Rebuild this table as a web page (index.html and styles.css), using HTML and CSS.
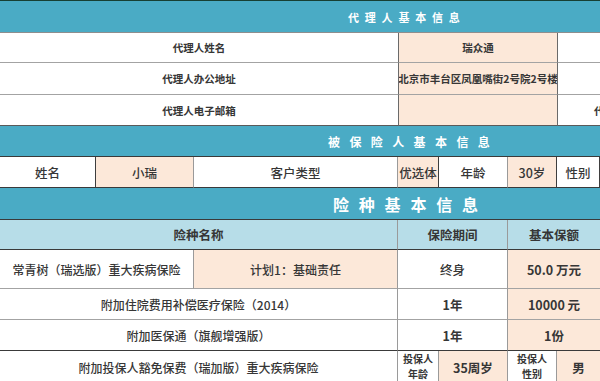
FILE: index.html
```html
<!DOCTYPE html>
<html lang="zh">
<head>
<meta charset="utf-8">
<title>保险信息</title>
<link rel="stylesheet" href="styles.css">
</head>
<body>
<div class="sheet">
  <div class="c hd hd1 span7"><span>代理人基本信息</span></div>

  <div class="c lbl span3 bl">代理人姓名</div>
  <div class="c val peach span3 bl vd">瑞众通</div>
  <div class="c blank bl vd"></div>

  <div class="c lbl span3 bl">代理人办公地址</div>
  <div class="c val peach span3 bl vd">北京市丰台区凤凰嘴街2号院2号楼</div>
  <div class="c blank bl vd"></div>

  <div class="c lbl span3 bd">代理人电子邮箱</div>
  <div class="c val peach span3 bd vd"></div>
  <div class="c blank clip bd vd"><span>代理人电话</span></div>

  <div class="c hd hd2 span7 bdk"><span>被保险人基本信息</span></div>

  <div class="c ins bdk vdk">姓名</div>
  <div class="c ins peach bdk vg">小瑞</div>
  <div class="c ins bdk vg">客户类型</div>
  <div class="c ins peach bdk vdk">优选体</div>
  <div class="c ins bdk vg">年龄</div>
  <div class="c ins peach bdk vdk">30岁</div>
  <div class="c ins bdk vdk">性别</div>

  <div class="c hd hd3 span7 bdk"><span>险种基本信息</span></div>

  <div class="c colhd span3 bdk vg">险种名称</div>
  <div class="c colhd span2 bdk vg">保险期间</div>
  <div class="c colhd span2 bdk">基本保额</div>

  <div class="c name span2 bl vg">常青树（瑞选版）重大疾病保险</div>
  <div class="c name peach bl vg">计划1：基础责任</div>
  <div class="c cov light span2 bl vg">终身</div>
  <div class="c cov peach span2 bl">50.0 万元</div>

  <div class="c name span3 bl vg">附加住院费用补偿医疗保险（2014）</div>
  <div class="c cov span2 bl vg">1年</div>
  <div class="c cov peach span2 bl">10000 元</div>

  <div class="c name span3 bdk vg">附加医保通（旗舰增强版）</div>
  <div class="c cov span2 bdk vg">1年</div>
  <div class="c cov peach span2 bdk">1份</div>

  <div class="c name span3 vg">附加投保人豁免保费（瑞加版）重大疾病保险</div>
  <div class="c small vg">投保人<br>年龄</div>
  <div class="c cov peach vg">35周岁</div>
  <div class="c small vg">投保人<br>性别</div>
  <div class="c cov peach">男</div>
</div>
</body>
</html>
```

FILE: styles.css
```css
html, body {
  margin: 0;
  padding: 0;
  background: #ffffff;
  overflow: hidden;
}

body {
  width: 600px;
  height: 381px;
  font-family: "Noto Sans CJK SC", "Noto Sans", sans-serif;
  color: #363636;
}

.sheet {
  display: grid;
  grid-template-columns: 96px 98px 204px 41px 69px 49px 43px;
  grid-template-rows: 32px 30px 32px 31px 31px 31px 32px 30px 39px 31px 31px 32px;
  border-top: 1px solid #173f33;
  width: 600px;
}

.c {
  box-sizing: border-box;
  display: flex;
  align-items: center;
  justify-content: center;
  text-align: center;
  white-space: nowrap;
  overflow: hidden;
  background: #ffffff;
}

.span2 { grid-column: span 2; }
.span3 { grid-column: span 3; }
.span7 { grid-column: span 7; }

.peach { background: #fce8d9; }

/* borders */
.bl { border-bottom: 1px solid #a3a3a3; }
.bd { border-bottom: 1px solid #5a5a5a; }
.bdk { border-bottom: 1px solid #3a3a3a; }
.vd { border-left: 1px solid #6a6a6a; }
.vdk { border-right: 1px solid #3e3e3e; }
.vg { border-right: 1px solid #9a9a9a; }

/* teal header bands */
.hd {
  background: #4aabc5;
  color: #ffffff;
  font-weight: 700;
  justify-content: flex-start;
}
.hd1 {
  border-bottom: 1px solid #8e8e8e;
  font-size: 11px;
  letter-spacing: 5.8px;
  padding-left: 348px;
}
.hd2 {
  font-size: 12px;
  letter-spacing: 9.4px;
  padding-left: 328px;
}
.hd3 {
  font-size: 16px;
  letter-spacing: 9.8px;
  padding-left: 333px;
}

/* agent section */
.lbl, .val, .blank {
  font-size: 10.5px;
  font-weight: 700;
}
.clip {
  justify-content: flex-start;
  padding-left: 36px;
}

/* insured row */
.ins {
  font-size: 12.5px;
  font-weight: 500;
}

/* coverage */
.colhd {
  background: #b7dde8;
  font-size: 12.5px;
  font-weight: 700;
}
.name {
  font-size: 12px;
  font-weight: 500;
}
.cov {
  font-size: 12.5px;
  font-weight: 700;
}
.cov.light {
  font-weight: 500;
}
.small {
  font-size: 10px;
  font-weight: 700;
  line-height: 15px;
  white-space: normal;
  align-items: flex-start;
  padding-top: 0;
}
```
